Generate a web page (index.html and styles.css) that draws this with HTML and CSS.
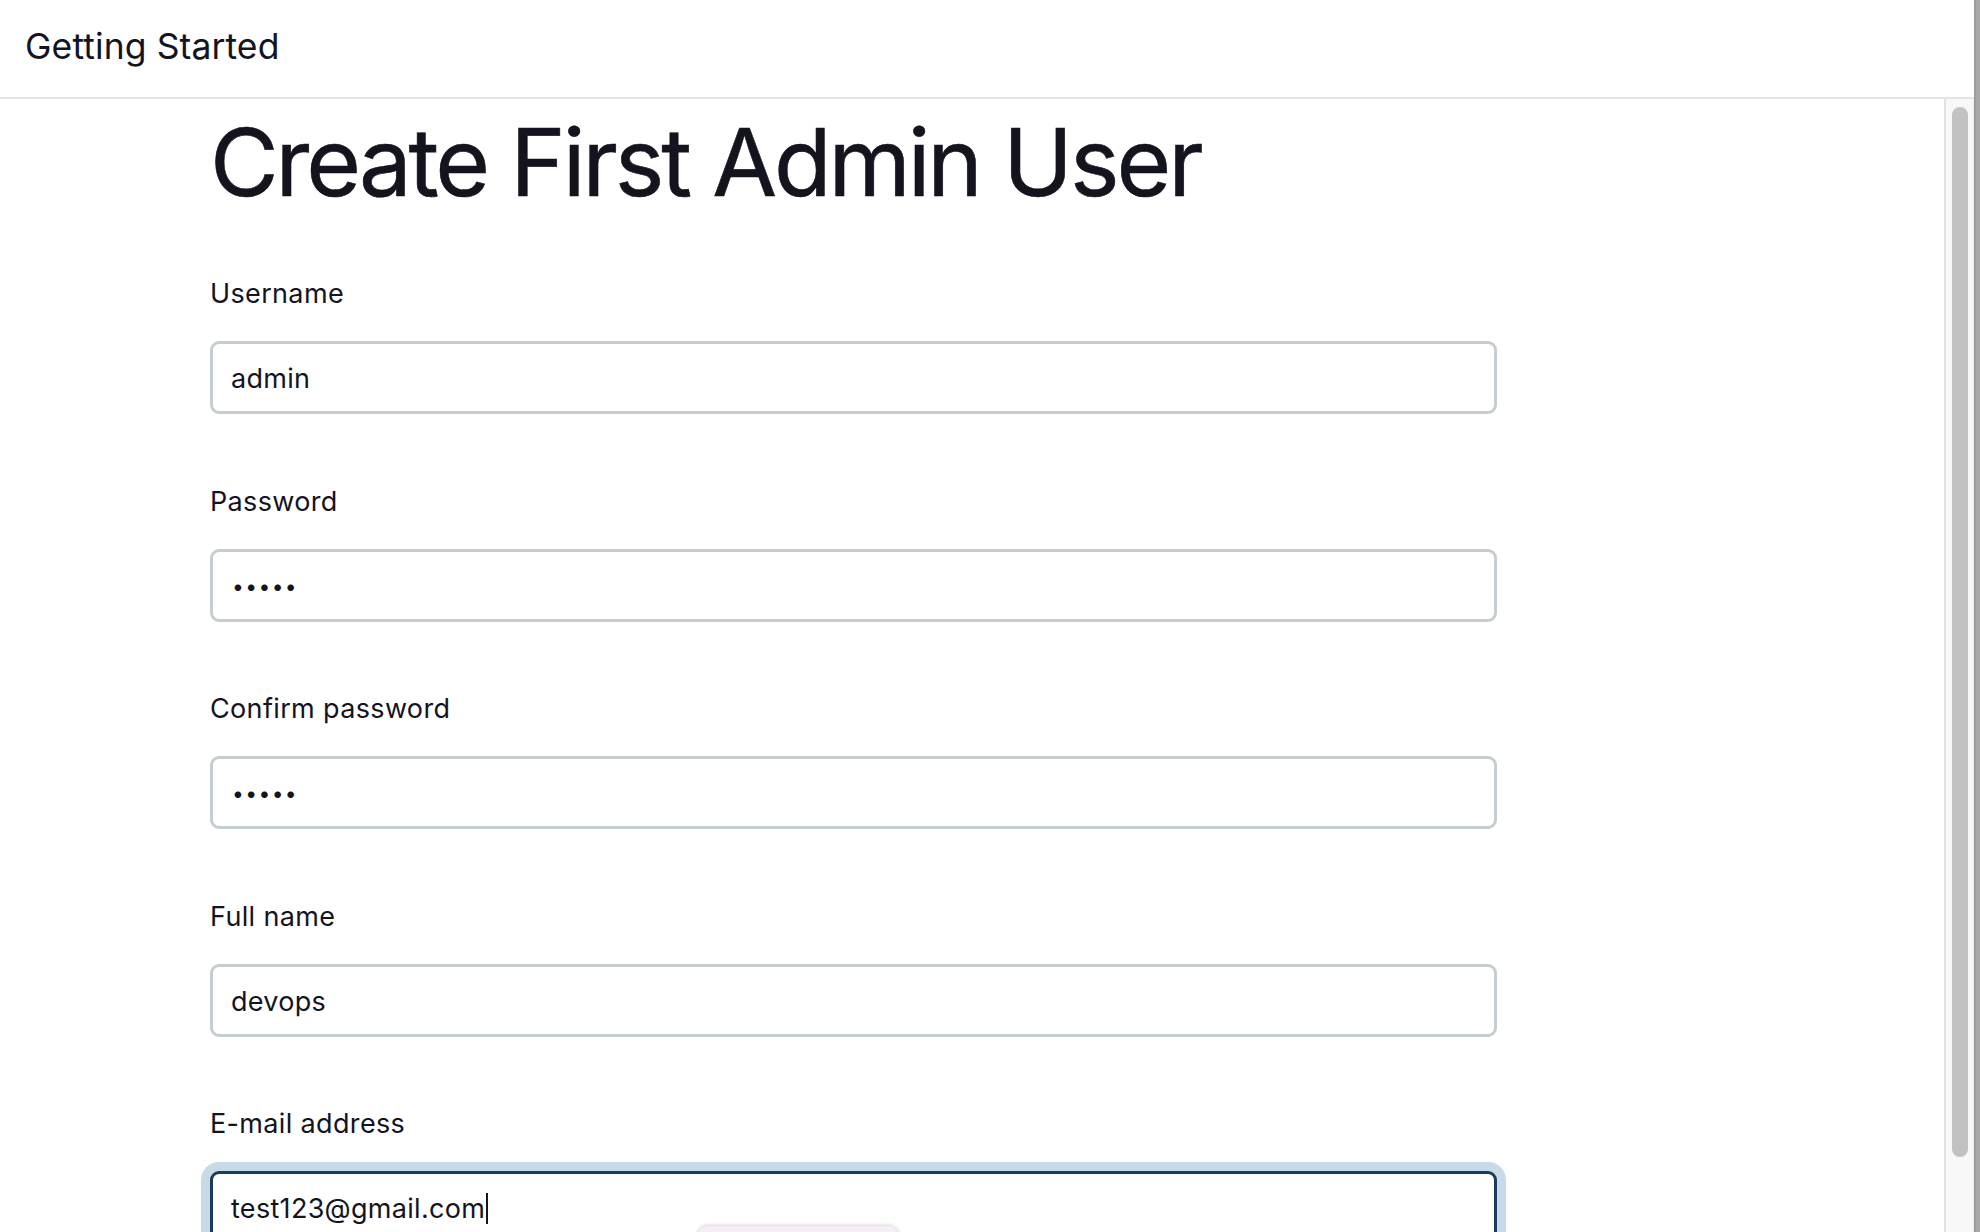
FILE: index.html
```html
<!DOCTYPE html>
<html lang="en">
<head>
<meta charset="utf-8">
<title>Getting Started</title>
<link rel="stylesheet" href="styles.css">
</head>
<body>
<div class="app">
  <div class="window">
    <header class="topbar">
      <h1 class="topbar-title">Getting Started</h1>
    </header>
    <div class="body">
      <main class="content">
        <h2 class="page-title">Create First Admin User</h2>
        <form class="form">
          <div class="field">
            <label class="label" for="username">Username</label>
            <input class="input" id="username" type="text" value="admin">
          </div>
          <div class="field">
            <label class="label" for="password">Password</label>
            <input class="input input-secret" id="password" type="password" value="admin">
          </div>
          <div class="field">
            <label class="label" for="confirm">Confirm password</label>
            <input class="input input-secret" id="confirm" type="password" value="admin">
          </div>
          <div class="field">
            <label class="label" for="fullname">Full name</label>
            <input class="input" id="fullname" type="text" value="devops">
          </div>
          <div class="field">
            <label class="label" for="email">E-mail address</label>
            <div class="input-wrap">
              <div class="input input-focused" id="email"><span class="value">test123@gmail.com</span><span class="caret"></span></div>
              <div class="autofill-popup"></div>
            </div>
          </div>
        </form>
      </main>
      <div class="scrollbar"><div class="thumb"></div></div>
    </div>
  </div>
  <div class="edge"></div>
</div>
</body>
</html>
```
FILE: styles.css
```css
* { box-sizing: border-box; }

html, body {
  margin: 0;
  padding: 0;
  height: 1232px;
  overflow: hidden;
  background: #ffffff;
  font-family: Inter, "Noto Sans", "Liberation Sans", sans-serif;
  color: #14141f;
}

.app {
  display: flex;
  height: 1232px;
}

.window {
  flex: 1;
  display: flex;
  flex-direction: column;
  min-width: 0;
}

.topbar {
  height: 99px;
  border-bottom: 2px solid #e4e4e4;
  display: flex;
  align-items: center;
  padding: 0 0 3px 25px;
}

.topbar-title {
  margin: 0;
  font-size: 35.5px;
  font-weight: 400;
  line-height: 1.2;
  letter-spacing: 0.1px;
}

.body {
  flex: 1;
  display: flex;
  min-height: 0;
}

.content {
  flex: 1;
  padding: 7px 0 0 210px;
  overflow: hidden;
}

.page-title {
  margin: 0;
  font-size: 94px;
  font-weight: 400;
  line-height: 113px;
  letter-spacing: -3.1px;
  -webkit-text-stroke: 0.6px #14141f;
}

.form {
  margin-top: 57px;
  width: 1287px;
}

.field {
  margin-bottom: 69.6px;
}

.label {
  display: block;
  font-size: 27px;
  line-height: 36px;
  letter-spacing: 0.35px;
  margin-bottom: 29px;
}

.input-wrap {
  position: relative;
}

.input {
  display: flex;
  align-items: center;
  width: 100%;
  height: 73px;
  border: 3px solid #c6cdd1;
  border-radius: 9px;
  padding: 2px 18px 0;
  font-family: inherit;
  font-size: 27px;
  letter-spacing: 0.3px;
  color: #14141f;
  background: #ffffff;
  outline: none;
}

.input-secret {
  font-size: 21px;
  letter-spacing: 1.4px;
  padding-left: 19px;
}

.input-focused {
  border-color: #1b3c5a;
  box-shadow: 0 0 0 9px #c6dae8;
}

.caret {
  display: inline-block;
  width: 2px;
  height: 31px;
  background: #14141f;
  margin-left: 1px;
}

.autofill-popup {
  position: absolute;
  left: 488px;
  top: 55px;
  width: 200px;
  height: 40px;
  background: #f3eff5;
  border-radius: 9px;
  box-shadow: 0 0 4px rgba(0, 0, 0, 0.25);
}

.scrollbar {
  width: 30px;
  background: #f8f8f8;
  border-left: 2px solid #e2e2e2;
  border-right: 1px solid #ececec;
  padding: 8px 0 0 6px;
}

.thumb {
  width: 16px;
  height: 1050px;
  border-radius: 8px;
  background: #c2c2c2;
}

.edge {
  width: 6px;
  background: #a8a8a8;
  border-left: 2px solid #9c9c9c;
}
```
